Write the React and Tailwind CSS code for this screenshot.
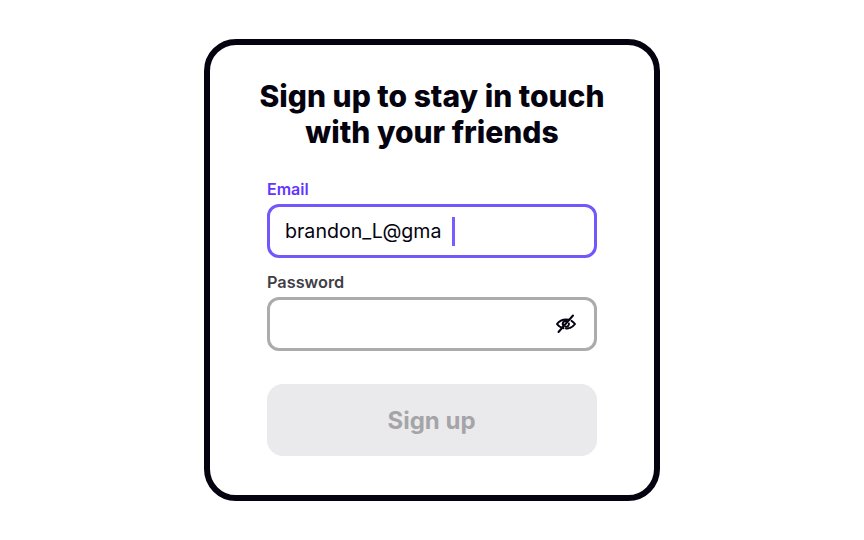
export default function App() {
  return (
    <div className="flex h-[540px] w-[864px] items-center justify-center bg-white font-['Inter',sans-serif]">
      <div className="flex h-[462px] w-[456px] flex-col items-center rounded-[32px] border-[6px] border-[#05030f] bg-white pt-[33px]">
        {/* Heading */}
        <h1 className="w-[380px] text-center text-[30px] leading-[36px] font-extrabold text-[#05030f]">
          Sign up to stay in touch with your friends
        </h1>

        <div className="mt-[29px] flex w-[330px] flex-col">
          {/* Email */}
          <label className="mb-[5px] text-[16px] leading-[20px] font-semibold text-[#6336ff]">
            Email
          </label>
          <div className="flex h-[54px] items-center rounded-[12px] border-[3px] border-[#7357fa] pl-[15px] text-[19.6px] text-[#05030f]">
            <span className="pt-[2px]">brandon_L@gma</span>
            <span className="ml-[10px] h-[29px] w-[3px] bg-[#7b5cff]" />
          </div>

          {/* Password */}
          <label className="mt-[14px] mb-[5px] text-[16.3px] leading-[20px] font-semibold text-[#3f3e47]">
            Password
          </label>
          <div className="flex h-[54px] items-center justify-end rounded-[12px] border-[3px] border-[#acacae] pr-[17px]">
            <svg width="22" height="22" viewBox="0 0 22 22" fill="none" stroke="#05030f" strokeWidth="2" strokeLinecap="round" strokeLinejoin="round">
              <path d="M8.500 15.300C5.800 14.800 3.700 13.300 2 11c2.200-3 5.200-4.600 9-4.600 1 0 1.900.1 2.800.3" />
              <path d="M13.500 15.300c-.8.200-1.600.300-2.500.300" />
              <path d="M16.500 7.800c1.400.8 2.500 1.900 3.500 3.200-1.400 1.900-3.100 3.300-5.200 4" />
              <path d="M8.400 12.600a2.900 2.900 0 0 1 3.700-4.300" />
              <path d="M13.900 10.500a2.900 2.900 0 0 1-3.300 3.300" />
              <path d="M18 2.500 3.500 19" />
            </svg>
          </div>

          {/* Submit */}
          <button className="mt-[33px] h-[72px] rounded-[16px] bg-[#eaeaec] pt-[2px] pr-[1px] text-[24px] font-bold text-[#a5a5a8]">
            Sign up
          </button>
        </div>
      </div>
    </div>
  );
}
